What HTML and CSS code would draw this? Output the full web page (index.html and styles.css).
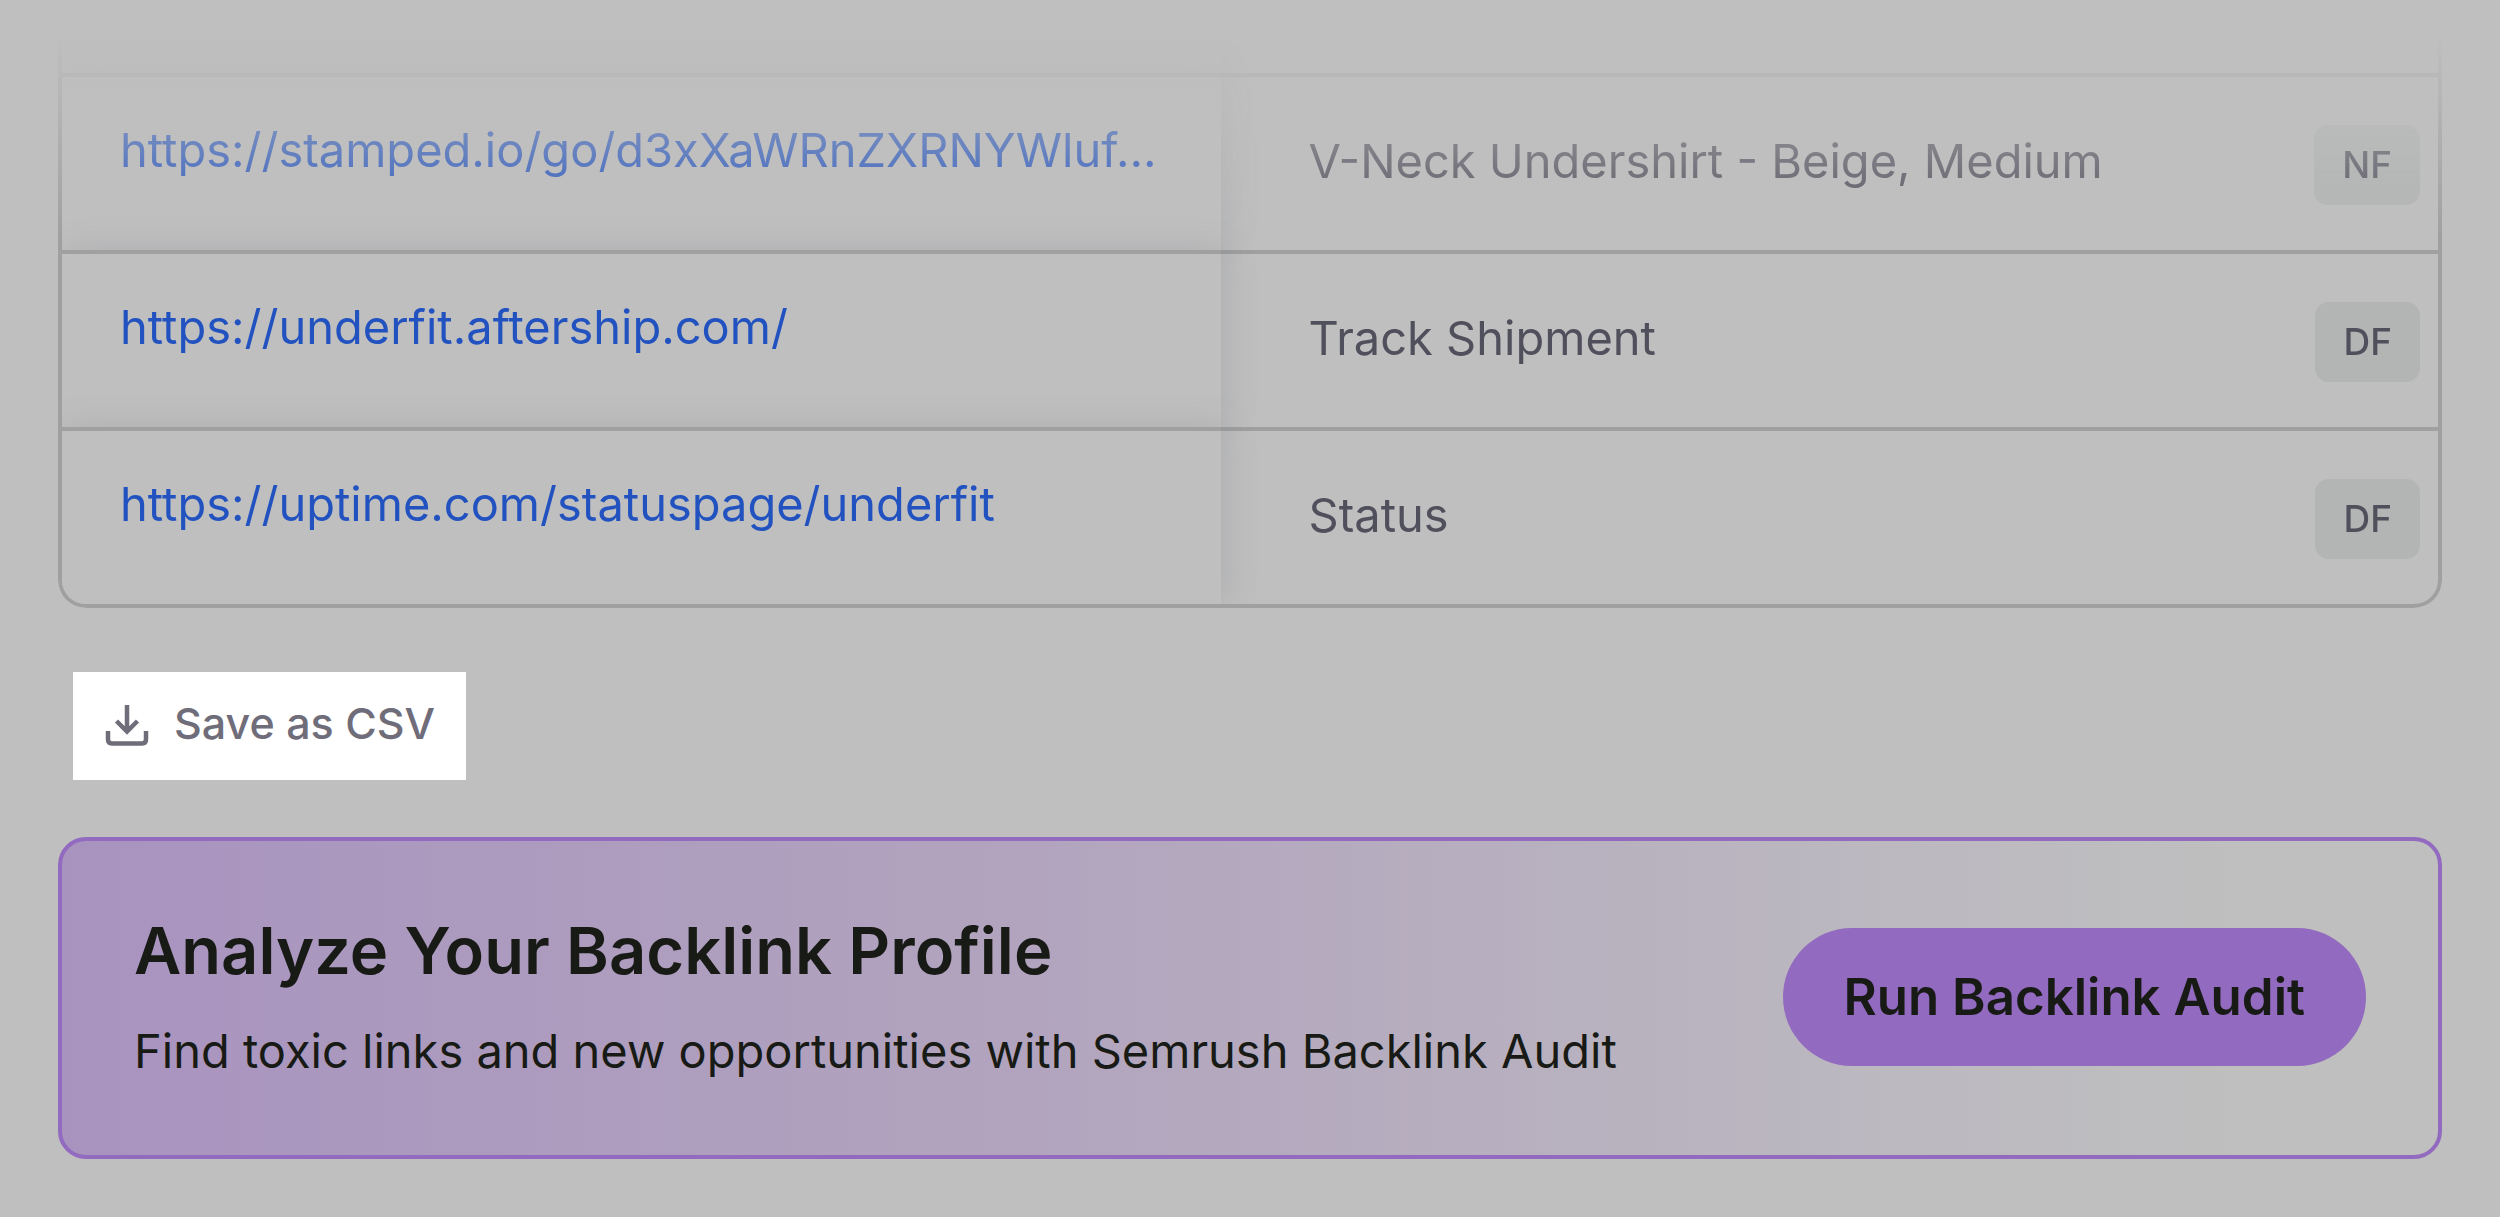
FILE: index.html
```html
<!DOCTYPE html>
<html lang="en">
<head>
  <meta charset="utf-8">
  <meta name="viewport" content="width=device-width, initial-scale=1">
  <title>Backlinks</title>
  <link rel="stylesheet" href="styles.css">
</head>
<body>
  <main class="page">
    <div class="table-frame">
      <table class="links">
        <colgroup>
          <col class="col-url">
          <col class="col-anchor">
          <col class="col-tag">
        </colgroup>
        <tbody>
          <tr class="row-cut"><td class="url"></td><td></td><td></td></tr>
          <tr>
            <td class="url"><a href="#stamped">https://stamped.io/go/d3xXaWRnZXRNYWluf...</a></td>
            <td class="anchor">V-Neck Undershirt - Beige, Medium</td>
            <td class="tag"><span class="badge">NF</span></td>
          </tr>
          <tr>
            <td class="url"><a href="#aftership">https://underfit.aftership.com/</a></td>
            <td class="anchor">Track Shipment</td>
            <td class="tag"><span class="badge">DF</span></td>
          </tr>
          <tr>
            <td class="url"><a href="#uptime">https://uptime.com/statuspage/underfit</a></td>
            <td class="anchor">Status</td>
            <td class="tag"><span class="badge">DF</span></td>
          </tr>
        </tbody>
      </table>
    </div>

    <button class="save" type="button">
      <svg class="save-icon" viewBox="0 0 48 48" aria-hidden="true">
        <path d="M24 6V32M13.500 22L24 32.500L34.500 22M5 32V40.500Q5 44.500 9 44.500H39Q43 44.500 43 40.500V32"/>
      </svg>
      Save as CSV
    </button>

    <section class="promo">
      <div class="promo-text">
        <h2>Analyze Your Backlink Profile</h2>
        <p>Find toxic links and new opportunities with Semrush Backlink Audit</p>
      </div>
      <button class="run" type="button">Run Backlink Audit</button>
    </section>
  </main>
</body>
</html>
```
FILE: styles.css
```css
* {
  box-sizing: border-box;
}

body {
  margin: 0;
  background: #bfbfbf;
  color: #171a15;
  font-family: Inter, "Liberation Sans", sans-serif;
  font-size: 47px;
  line-height: 64px;
  font-optical-sizing: none;
}

button {
  border: 0;
  font: inherit;
  cursor: pointer;
}

.page {
  display: flex;
  flex-direction: column;
  align-items: stretch;
  padding: 0 58px 58px;
}

/* The table fades in from the top edge */
.table-frame {
  overflow: hidden;
  border: solid #a0a0a0;
  border-width: 0 4px 4px;
  border-radius: 0 0 28px 28px;
  -webkit-mask-image: linear-gradient(transparent 36px, #000 240px);
  mask-image: linear-gradient(transparent 36px, #000 240px);
}

.links {
  width: 100%;
  table-layout: fixed;
  border-collapse: separate;
  border-spacing: 0;
}

.col-url {
  width: 48.8%;
}

.col-tag {
  width: 142px;
}

.links td {
  height: 177px;
  padding: 0;
  border-top: 4px solid #a0a0a0;
  vertical-align: top;
  white-space: nowrap;
}

.links .row-cut td {
  height: 73px;
  border-top: 0;
}

.links .url {
  position: relative;
  padding: 41px 58px 0;
  background: #bfbfbf;
  box-shadow: 4px 0 32px rgba(100, 105, 120, 0.2);
}

.url a {
  color: #2152c0;
  text-decoration: none;
}

.links .anchor {
  padding: 52px 24px 0 87px;
  color: #504f5c;
}

.links .tag {
  padding: 48px 18px 0 0;
  text-align: right;
}

.badge {
  display: inline-block;
  padding: 0 28px;
  border-radius: 14px;
  background: #b2b5b4;
  color: #504f5c;
  font-size: 37px;
  font-weight: 500;
  line-height: 80px;
  vertical-align: top;
}

.save {
  display: flex;
  align-items: center;
  align-self: flex-start;
  gap: 23px;
  margin: 64px 0 57px 15px;
  padding: 19px 31px 25px 30px;
  background: #fff;
  color: #6f6d7a;
  font-size: 43px;
  font-weight: 500;
}

.save-icon {
  width: 48px;
  height: 48px;
  fill: none;
  stroke: currentColor;
  stroke-width: 4.5;
}

.promo {
  display: flex;
  align-items: center;
  justify-content: space-between;
  gap: 48px;
  padding: 70px 72px 72px;
  border: 4px solid #926abf;
  border-radius: 28px;
  background: linear-gradient(90deg, #a893bf, #b2a4be 41%, #bbb8c0 76%, #bfbfbf 92%);
}

.promo h2 {
  margin: 0 0 28px;
  font-size: 65px;
  font-weight: 600;
  line-height: 80px;
}

.promo p {
  margin: 0;
}

.run {
  padding: 37px 61px;
  border-radius: 69px;
  background: #926abf;
  color: #171a15;
  font-size: 51px;
  font-weight: 600;
  white-space: nowrap;
}
```
